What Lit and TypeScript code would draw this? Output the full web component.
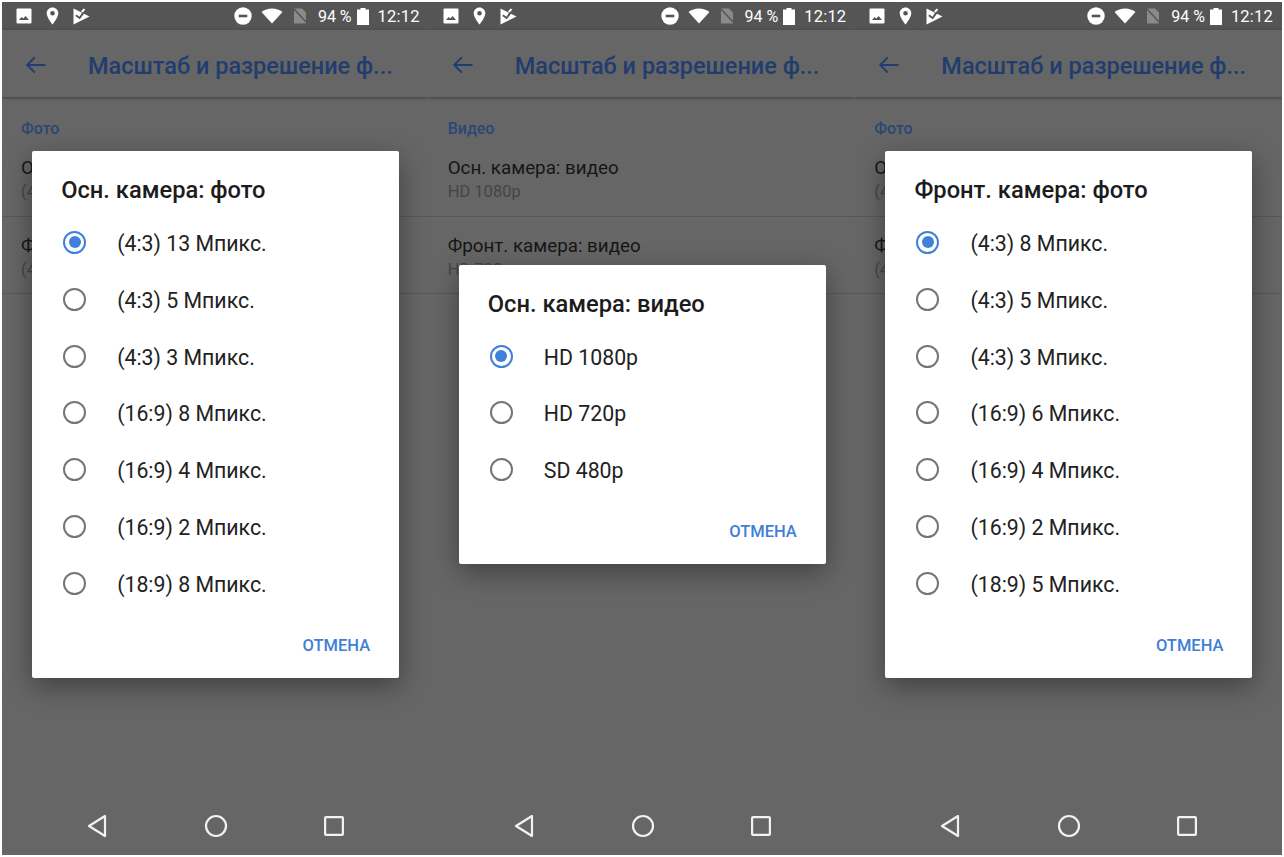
import { LitElement, html, css, svg } from "lit";
import { customElement, property } from "lit/decorators.js";

interface Screen {
  section: string;
  rows: { title: string; sub: string }[];
  dialogTitle: string;
  options: string[];
}

const screens: Screen[] = [
  {
    section: "Фото",
    rows: [
      { title: "Осн. камера: фото", sub: "(4:3) 13 Мпикс." },
      { title: "Фронт. камера: фото", sub: "(4:3) 8 Мпикс." },
    ],
    dialogTitle: "Осн. камера: фото",
    options: ["(4:3) 13 Мпикс.", "(4:3) 5 Мпикс.", "(4:3) 3 Мпикс.", "(16:9) 8 Мпикс.", "(16:9) 4 Мпикс.", "(16:9) 2 Мпикс.", "(18:9) 8 Мпикс."],
  },
  {
    section: "Видео",
    rows: [
      { title: "Осн. камера: видео", sub: "HD 1080p" },
      { title: "Фронт. камера: видео", sub: "HD 720p" },
    ],
    dialogTitle: "Осн. камера: видео",
    options: ["HD 1080p", "HD 720p", "SD 480p"],
  },
  {
    section: "Фото",
    rows: [
      { title: "Осн. камера: фото", sub: "(4:3) 13 Мпикс." },
      { title: "Фронт. камера: фото", sub: "(4:3) 8 Мпикс." },
    ],
    dialogTitle: "Фронт. камера: фото",
    options: ["(4:3) 8 Мпикс.", "(4:3) 5 Мпикс.", "(4:3) 3 Мпикс.", "(16:9) 6 Мпикс.", "(16:9) 4 Мпикс.", "(16:9) 2 Мпикс.", "(18:9) 5 Мпикс."],
  },
];

const iconImage = svg`<svg width="16" height="16" viewBox="0 0 16 16"><rect x="0.5" y="0.5" width="15" height="15" rx="1" fill="#fff"/><path d="M3 12l2.6-3 1.7 1.6L9.6 8 13 12z" fill="#555"/></svg>`;
const iconPin = svg`<svg width="13" height="18" viewBox="0 0 13 18"><path fill-rule="evenodd" d="M6.5 0.5C3.2 0.5.7 3 .7 6.2c0 4.2 5.8 11.3 5.8 11.3s5.8-7.1 5.8-11.3C12.300 3 9.800.5 6.500.5zM6.500 8.600a2.300 2.300 0 1 1 0-4.600 2.300 2.300 0 0 1 0 4.600z" fill="#fff"/></svg>`;
const iconFlag = svg`<svg width="17" height="17" viewBox="0 0 17 17"><path d="M0.500 0.500L9 4.800 6.500 8.800 3.300 6.500 2.300 8 6.800 11.200 11 5.800 16.500 8.500 0.500 16.500z" fill="#fff"/><path d="M8 3.500L10.500 0.500 12.300 1.500 9.800 4.600z" fill="#fff"/></svg>`;
const iconDnd = svg`<svg width="18" height="18" viewBox="0 0 18 18"><circle cx="9" cy="9" r="8.700" fill="#fff"/><rect x="4.700" y="7.700" width="8.600" height="2.600" fill="#555"/></svg>`;
const iconWifi = svg`<svg width="22" height="16" viewBox="0 0 22 16"><path d="M11 15.500L.5 4C3.500 1.700 7 .5 11 .5S18.500 1.700 21.500 4z" fill="#fff"/></svg>`;
const iconNoSim = svg`<svg width="15" height="16" viewBox="0 0 15 16"><path d="M1 .5h8l4 4v11H1z" fill="#8a8a8a"/><path d="M.5 .5L14.500 15.500" stroke="#555" stroke-width="1.500"/></svg>`;
const iconBattery = svg`<svg width="12" height="17" viewBox="0 0 12 17"><path d="M3.500 0h5v1.500H12V17H0V1.500h3.500z" fill="#fff"/></svg>`;
const iconBack = svg`<svg width="22" height="18" viewBox="0 0 24 20"><path d="M22.500 10H2.500M10.700 1.500L2.300 10l8.400 8.500" fill="none" stroke="#213d6e" stroke-width="2.200"/></svg>`;
const navBack = svg`<svg width="20" height="24" viewBox="0 0 20 24"><path d="M18 2L2 12l16 10z" fill="none" stroke="#f2f2f2" stroke-width="2.200" stroke-linejoin="round"/></svg>`;
const navHome = svg`<svg width="24" height="24" viewBox="0 0 24 24"><circle cx="12" cy="12" r="10" fill="none" stroke="#f2f2f2" stroke-width="2.200"/></svg>`;
const navRecent = svg`<svg width="20" height="20" viewBox="0 0 20 20"><rect x="1.100" y="1.100" width="17.800" height="17.800" rx="1" fill="none" stroke="#f2f2f2" stroke-width="2.200"/></svg>`;

@customElement("phone-screen")
export class PhoneScreen extends LitElement {
  @property({ attribute: false }) data!: Screen;

  static styles = css`
    :host {
      display: flex;
      flex-direction: column;
      position: relative;
      height: 853px;
      background: #666;
      font-family: Roboto, "Noto Sans", sans-serif;
      overflow: hidden;
    }
    .status {
      height: 28px;
      flex: none;
      background: #555;
      display: flex;
      align-items: center;
      padding: 0 9px 0 14px;
      color: #fff;
      font-size: 16px;
      box-sizing: border-box;
    }
    .status svg { display: block; flex: none; }
    .left { display: flex; align-items: center; gap: 14px; }
    .right { display: flex; align-items: center; margin-left: auto; }
    .gap-dnd { margin-right: 9px; }
    .gap-wifi { margin-right: 10px; }
    .gap-sim { margin-right: 10px; }
    .batt { margin: 0 9px 0 5px; }
    .time { font-size: 16.500px; letter-spacing: 0.200px; }
    .bar {
      height: 67px;
      flex: none;
      display: flex;
      align-items: center;
      box-shadow: 0 1px 3px rgba(0, 0, 0, 0.4);
      padding: 2px 0 0 23px;
      box-sizing: border-box;
      position: relative;
    }
    .bar svg { flex: none; margin-right: 41px; }
    .bar-title {
      font-size: 23.500px;
      font-weight: 500;
      color: #213d6e;
      white-space: nowrap;
      padding-top: 3px;
    }
    .section {
      padding: 23px 19px 0;
      font-size: 16px;
      font-weight: 500;
      color: #2a4776;
      line-height: 18px;
    }
    .row {
      padding: 17px 19px 0;
      height: 77px;
      box-sizing: border-box;
      border-bottom: 1px solid #585858;
    }
    .section + .row { height: 79px; padding-top: 18px; }
    .row-title { font-size: 18.800px; color: #161616; line-height: 25px; }
    .row-sub { font-size: 16.500px; color: #454545; line-height: 22px; }
    .nav {
      margin-top: auto;
      height: 58px;
      flex: none;
      display: flex;
      align-items: center;
      padding-left: 85px;
      box-sizing: border-box;
    }
    .nav svg { display: block; flex: none; }
    .nav .n1 { margin-right: 97px; }
    .nav .n2 { margin-right: 96px; }
    .overlay {
      position: absolute;
      inset: 0 0 28px 0;
      display: flex;
      align-items: center;
      justify-content: center;
      padding-left: 0.6px;
    }
    .dialog {
      width: 367px;
      background: #fff;
      border-radius: 2px;
      box-shadow: 0 8px 28px rgba(0, 0, 0, 0.38);
      padding: 25px 29px 20px;
      box-sizing: border-box;
    }
    .dlg-title {
      font-size: 23.700px;
      font-weight: 500;
      color: #1c1c1c;
      line-height: 28px;
      margin-bottom: 11px;
    }
    .opt {
      height: 56.900px;
      display: flex;
      align-items: center;
    }
    .radio {
      width: 19px;
      height: 19px;
      border: 2px solid #757575;
      border-radius: 50%;
      margin: 0 31px 2px 2px;
      flex: none;
      display: flex;
      align-items: center;
      justify-content: center;
    }
    .radio.on { border-color: #3f80dc; }
    .radio.on::after {
      content: "";
      width: 12px;
      height: 12px;
      border-radius: 50%;
      background: #3f80dc;
    }
    .opt-text { font-size: 21.300px; color: #222; white-space: nowrap; }
    .actions {
      display: flex;
      justify-content: flex-end;
      margin-top: 21px;
    }
    .cancel {
      font-size: 16.500px;
      font-weight: 500;
      color: #3f7fd6;
      line-height: 24px;
    }
  `;

  render() {
    const d = this.data;
    return html`
      <div class="status">
        <div class="left">${iconImage}${iconPin}${iconFlag}</div>
        <div class="right">
          <span class="gap-dnd">${iconDnd}</span>
          <span class="gap-wifi">${iconWifi}</span>
          <span class="gap-sim">${iconNoSim}</span>
          <span>94 %</span>
          <span class="batt">${iconBattery}</span>
          <span class="time">12:12</span>
        </div>
      </div>
      <div class="bar">${iconBack}<span class="bar-title">Масштаб и разрешение ф...</span></div>
      <div class="section">${d.section}</div>
      ${d.rows.map(
        (r) => html`<div class="row"><div class="row-title">${r.title}</div><div class="row-sub">${r.sub}</div></div>`
      )}
      <div class="nav">
        <span class="n1">${navBack}</span>
        <span class="n2">${navHome}</span>
        <span>${navRecent}</span>
      </div>
      <div class="overlay">
        <div class="dialog">
          <div class="dlg-title">${d.dialogTitle}</div>
          ${d.options.map(
            (o, i) => html`<div class="opt"><span class="radio ${i === 0 ? "on" : ""}"></span><span class="opt-text">${o}</span></div>`
          )}
          <div class="actions"><span class="cancel">ОТМЕНА</span></div>
        </div>
      </div>
    `;
  }
}

@customElement("app-root")
export class AppRoot extends LitElement {
  static styles = css`
    :host {
      display: block;
      background: #fff;
      min-height: 857px;
      box-sizing: border-box;
      padding: 2px;
    }
    .grid {
      display: grid;
      grid-template-columns: repeat(3, 1fr);
    }
  `;
  render() {
    return html`<div class="grid">${screens.map((s) => html`<phone-screen .data=${s}></phone-screen>`)}</div>`;
  }
}
